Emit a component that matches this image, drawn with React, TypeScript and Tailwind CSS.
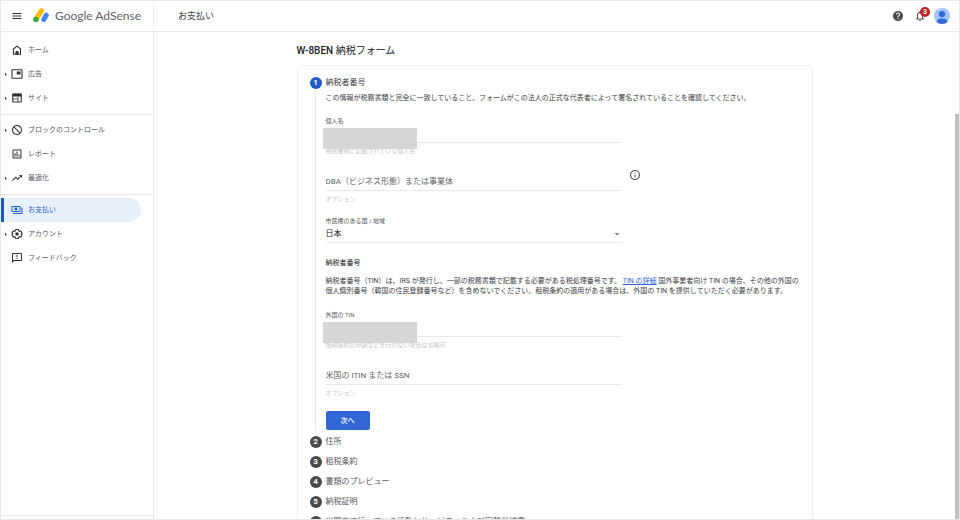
import { useId } from "react";
import type { ReactNode } from "react";
import {
  MdArrowDropDown,
  MdBlock,
  MdHelp,
  MdMenu,
  MdNotificationsNone,
  MdOutlineAssessment,
  MdOutlineFeedback,
  MdOutlineInfo,
  MdOutlinePayments,
  MdTrendingUp,
} from "react-icons/md";

function HomeIcon() {
  return (
    <svg viewBox="0 0 24 24" className="size-3" fill="none" aria-hidden="true">
      <path d="M5 20.500V10L12 4.200 19 10v10.500z" stroke="currentColor" strokeWidth="2.200" strokeLinejoin="round" />
      <path d="M8.800 21v-4.500a3.200 3.200 0 0 1 6.400 0V21z" fill="currentColor" />
    </svg>
  );
}

function AdsIcon() {
  return (
    <svg viewBox="0 0 24 24" className="size-3" fill="none" aria-hidden="true">
      <rect x="2" y="3.500" width="20" height="17" rx="1" stroke="currentColor" strokeWidth="2.200" />
      <path d="M11.500 7H19v6h-7.500z" fill="currentColor" />
    </svg>
  );
}

function SiteIcon() {
  return (
    <svg viewBox="0 0 24 24" className="size-3" fill="none" aria-hidden="true">
      <rect x="3.500" y="4" width="17" height="16" rx="1" stroke="currentColor" strokeWidth="2.200" />
      <path d="M3 3.500h18V9H3z" fill="currentColor" />
      <path d="M4 14h10M14 9v11" stroke="currentColor" strokeWidth="1.600" />
    </svg>
  );
}

function GearIcon() {
  return (
    <svg viewBox="0 0 24 24" className="size-3" fill="none" aria-hidden="true">
      <path
        d="M9.500 3h5l.8 2.600 1.900 1.100 2.600-.6 2.300 4-1.800 1.900 1.800 1.900-2.300 4-2.600-.6-1.900 1.100-.8 2.600h-5l-.8-2.600-1.900-1.100-2.600.6-2.300-4L3.700 12l-1.800-1.900 2.300-4 2.600.6 1.900-1.100z"
        stroke="currentColor"
        strokeWidth="2.200"
        strokeLinejoin="round"
      />
      <circle cx="12" cy="12" r="3.600" fill="currentColor" />
    </svg>
  );
}

function AdSenseLogo() {
  return (
    <svg viewBox="0 0 18 16" className="h-4 w-[18px]" fill="none" aria-hidden="true">
      <path d="M8.300 2.900 3.200 11" stroke="#fbbc04" strokeWidth="5.200" strokeLinecap="round" />
      <circle cx="2.900" cy="11.400" r="2.700" fill="#34a853" />
      <path d="M13.300 7.200 10.800 11.500" stroke="#4285f4" strokeWidth="5" strokeLinecap="round" />
    </svg>
  );
}

type NavItem = { label: string; icon: ReactNode; expandable?: boolean; active?: boolean };

const navGroups: NavItem[][] = [
  [
    { label: "ホーム", icon: <HomeIcon /> },
    { label: "広告", icon: <AdsIcon />, expandable: true },
    { label: "サイト", icon: <SiteIcon />, expandable: true },
  ],
  [
    { label: "ブロックのコントロール", icon: <MdBlock className="size-3 -scale-x-100" />, expandable: true },
    { label: "レポート", icon: <MdOutlineAssessment className="size-3" /> },
    { label: "最適化", icon: <MdTrendingUp className="size-3" />, expandable: true },
  ],
  [
    { label: "お支払い", icon: <MdOutlinePayments className="size-3" />, active: true },
    { label: "アカウント", icon: <GearIcon />, expandable: true },
    { label: "フィードバック", icon: <MdOutlineFeedback className="size-3" /> },
  ],
];

function NavLink({ item }: { item: NavItem }) {
  return (
    <a
      href="#"
      aria-current={item.active ? "page" : undefined}
      className={
        item.active
          ? "mr-3 flex h-6 items-center rounded-r-full border-l-[3px] border-[#185abc] bg-[#e8f0fe] pl-px text-[#1a5fc8]"
          : "mr-3 flex h-6 items-center pl-1 text-[#303134]"
      }
    >
      <span className="w-[6px]">
        {item.expandable && (
          <svg viewBox="0 0 4 6" className="h-[3px] w-[2px]" aria-hidden="true">
            <path d="M0 0l4 3-4 3z" fill="currentColor" />
          </svg>
        )}
      </span>
      {item.icon}
      <span className={item.active ? "flex-1 pl-[5px]" : "flex-1 pl-[5px] text-[#55585c]"}>{item.label}</span>
    </a>
  );
}

type FieldProps = { label: string; helper: string; floating?: boolean; masked?: boolean };

function TextField({ label, helper, floating, masked }: FieldProps) {
  const id = useId();
  return (
    <div className="relative flex max-w-[296px] flex-col">
      {floating && (
        <label htmlFor={id} className="text-[6px] leading-[8px] text-[#55585c]">
          {label}
        </label>
      )}
      <input
        id={id}
        type="text"
        aria-label={floating ? undefined : label}
        placeholder={floating ? undefined : label}
        className="h-[18px] w-full border-b border-[#e8e8e8] text-[8px] outline-none placeholder:text-[#606367]"
      />
      <p className="mt-1 text-[6px] leading-[8px] text-[#c4c7cb]">{helper}</p>
      {masked && <span className="absolute top-[11px] -left-[3px] h-[21px] w-[94px] bg-[#d6d6d6]" />}
    </div>
  );
}

function StepBadge({ n, active }: { n: number; active?: boolean }) {
  return (
    <span
      className={
        active
          ? "flex size-3 shrink-0 items-center justify-center rounded-full bg-[#1f5bc4] text-[8px] font-bold text-white"
          : "flex size-3 shrink-0 items-center justify-center rounded-full bg-[#4a4a4a] text-[8px] font-bold text-white"
      }
    >
      {n}
    </span>
  );
}

const laterSteps = [
  "住所",
  "租税条約",
  "書類のプレビュー",
  "納税証明",
  "米国内で行っている活動とサービス、および宣誓供述書",
];

export default function App() {
  const countryId = useId();
  return (
    <div
      lang="ja"
      className="flex h-screen flex-col overflow-hidden border border-[#e8e8e8] bg-white font-[Roboto,'Noto_Sans_CJK_JP',sans-serif] text-[7px] leading-[10px] text-[#3c4043]"
    >
      <header className="flex h-[31px] shrink-0 items-center border-b border-[#e8e8e8] pr-[9px]">
        <div className="flex w-[153px] items-center border-r border-[#ececec] py-1 pl-[10px]">
          <button type="button" aria-label="メニュー" className="text-[#303134]">
            <MdMenu className="size-3" />
          </button>
          <span className="ml-[10px]">
            <AdSenseLogo />
          </span>
          <span className="ml-1 font-[Lato,sans-serif] text-[12px] leading-4 whitespace-nowrap text-[#5f6368]">
            Google AdSense
          </span>
        </div>
        <h1 className="ml-6 flex-1 text-[9px]">お支払い</h1>
        <div className="flex items-center">
          <button type="button" aria-label="ヘルプ" className="text-[#4a4a4a]">
            <MdHelp className="size-3" />
          </button>
          <button type="button" aria-label="通知" className="relative ml-[10px] text-[#4a4a4a]">
            <MdNotificationsNone className="size-3" />
            <span className="absolute -top-[3px] left-[6px] flex size-[10px] items-center justify-center rounded-full bg-[#c5221f] text-[7px] font-bold text-white">
              3
            </span>
          </button>
          <button type="button" aria-label="プロフィール" className="ml-2">
            <svg viewBox="0 0 16 16" className="size-4" aria-hidden="true">
              <circle cx="8" cy="8" r="8" fill="#a0c3ff" />
              <circle cx="8" cy="6" r="3.100" fill="#3367d6" />
              <path d="M2.600 13.900c.4-2.700 2.400-3.500 5.400-3.500s5 .8 5.400 3.500A8 8 0 0 1 8 16a8 8 0 0 1-5.400-2.100z" fill="#3367d6" />
            </svg>
          </button>
        </div>
      </header>

      <div className="flex min-h-0 flex-1">
        <nav className="flex w-[153px] shrink-0 flex-col border-r border-[#e8e8e8] pt-[6px]">
          {navGroups.map((group, i) => (
            <div key={i} className={i > 0 ? "mt-1 border-t border-[#e8e8e8] pt-[3px]" : ""}>
              {group.map((item) => (
                <NavLink key={item.label} item={item} />
              ))}
            </div>
          ))}
          <div className="mt-auto h-1 border-t border-[#e8e8e8]" />
        </nav>

        <main className="min-w-0 flex-1 overflow-hidden">
          <div className="mx-auto w-full max-w-[516px]">
            <h2 className="pt-3 text-[10px] leading-[14px] text-[#202124]">
              <span className="font-medium">W-8BEN</span> 納税フォーム
            </h2>
            <div className="mt-[7px] rounded-sm border border-[#eeeeee] px-3 pt-[11px] pb-3">
              <section>
                <div className="flex h-3 items-center gap-1">
                  <StepBadge n={1} active />
                  <h3 className="text-[8px]">納税者番号</h3>
                </div>
                <div className="ml-[5px] border-l border-[#e8e8e8] pt-1 pl-[10px]">
                  <p>
                    この情報が税務書類と完全に一致していること、フォームがこの法人の正式な代表者によって署名されていることを確認してください。
                  </p>
                  <div className="mt-[14px] flex items-center gap-[7px]">
                    <div className="flex max-w-[296px] flex-1 flex-col gap-[18px]">
                      <TextField label="個人名" helper="税務書類に記載されている個人名" floating masked />
                      <TextField label="DBA（ビジネス形態）または事業体" helper="オプション" />
                    </div>
                    <button type="button" aria-label="詳細" className="mt-[30px] text-[#55585c]">
                      <MdOutlineInfo className="size-3" />
                    </button>
                  </div>
                  <div className="relative mt-[14px] flex max-w-[296px] flex-col">
                    <label htmlFor={countryId} className="text-[6px] leading-[8px] text-[#55585c]">
                      市民権のある国 / 地域
                    </label>
                    <select
                      id={countryId}
                      className="h-[18px] w-full appearance-none border-b border-[#e8e8e8] text-[8px] text-[#202124] outline-none"
                    >
                      <option>日本</option>
                    </select>
                    <MdArrowDropDown className="pointer-events-none absolute -right-px bottom-[3px] size-3 text-[#80868b]" />
                  </div>
                  <h4 className="mt-[15px] text-[#202124]">納税者番号</h4>
                  <p className="mt-2">
                    納税者番号（TIN）は、IRS が発行し、一部の税務書類で記載する必要がある税処理番号です。{" "}
                    <a href="#" className="text-[#3367d6] underline">
                      TIN の詳細
                    </a>{" "}
                    国外事業者向け TIN の場合、その他の外国の個人識別番号（韓国の住民登録番号など）を含めないでください。租税条約の適用がある場合は、外国の TIN を提供していただく必要があります。
                  </p>
                  <div className="mt-[15px] flex flex-col gap-[18px]">
                    <TextField label="外国の TIN" helper="租税条約の申請などを行わない場合は省略可" floating masked />
                    <TextField label="米国の ITIN または SSN" helper="オプション" />
                  </div>
                  <button
                    type="button"
                    className="mt-[14px] block h-[19px] w-11 rounded-[2px] bg-[#3367d6] text-[7px] font-medium text-white"
                  >
                    次へ
                  </button>
                </div>
              </section>
              <ol className="mt-[6px] flex flex-col gap-2">
                {laterSteps.map((label, i) => (
                  <li key={label} className="flex h-3 items-center gap-1 text-[8px] text-[#55585c]">
                    <StepBadge n={i + 2} />
                    <span>{label}</span>
                  </li>
                ))}
              </ol>
            </div>
          </div>
        </main>
        <div className="w-1 shrink-0 pt-[82px]">
          <div className="h-full bg-[#c1c1c1]" />
        </div>
      </div>
    </div>
  );
}
